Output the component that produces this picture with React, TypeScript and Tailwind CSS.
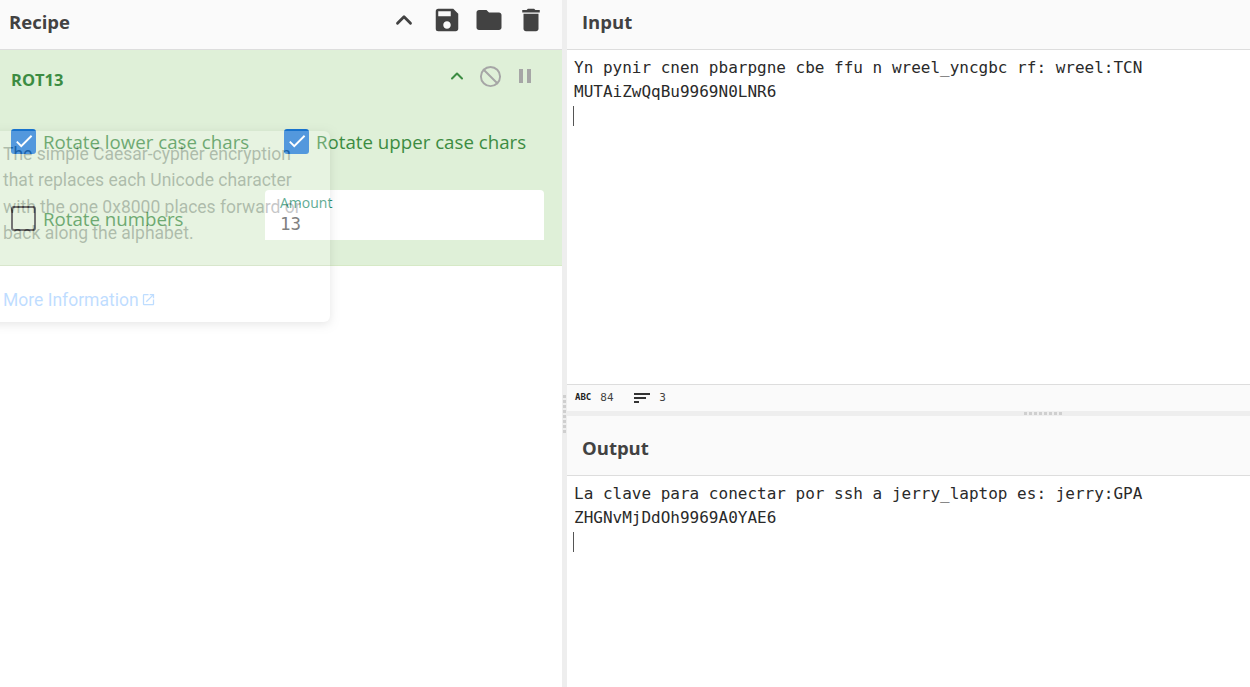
// CyberChef recipe view with a fading popover over the operation.

import { Ban, ChevronUp } from "lucide-react";
import { MdCheck, MdDelete, MdFolder, MdOpenInNew, MdPause, MdSave } from "react-icons/md";

const UI_FONT = "font-['Open_Sans','Noto_Sans',sans-serif]";
const MONO_FONT = "font-['DejaVu_Sans_Mono','Liberation_Mono',monospace]";

function Grip({ vertical }: { vertical?: boolean }) {
  const dots = Array.from({ length: 8 });
  return (
    <div className={vertical ? "flex flex-col gap-[2px]" : "flex flex-row gap-[2px]"}>
      {dots.map((_, i) => (
        <div key={i} className="h-[3px] w-[3px] bg-[#cfcfcf]" />
      ))}
    </div>
  );
}

function CheckRow({ label, checked, className }: { label: string; checked: boolean; className: string }) {
  return (
    <label className={`flex shrink-0 items-center gap-[7px] ${className}`}>
      {checked ? (
        <span className="flex h-[25px] w-[25px] items-center justify-center rounded-[3px] bg-[#1976d2]">
          <MdCheck className="text-white" size={22} />
        </span>
      ) : (
        <span className="h-[25px] w-[25px] rounded-[3px] border-2 border-[#444]" />
      )}
      <span className="pt-[2px] text-[18.7px] leading-[28px] text-[#3c8c42]">{label}</span>
    </label>
  );
}

function Popover() {
  return (
    <div className="absolute left-[-10px] top-[131px] h-[191px] w-[340px] rounded-[6px] bg-white opacity-25 shadow-[0_2px_10px_rgba(0,0,0,0.4)]">
      <div className="h-[134px] pl-[13px] pr-[25px] pt-[10px] font-['Roboto',sans-serif] text-[17.5px] leading-[26.4px] text-[#212529]">
        The simple Caesar-cypher encryption that replaces each Unicode character with the one 0x8000 places forward or
        back along the alphabet.
      </div>
      <div className="flex items-center gap-[2px] border-t border-[#dfdfdf] pl-[13px] pt-[21px] font-['Roboto',sans-serif] text-[17.5px] leading-[26px] text-[#007bff]">
        More Information
        <MdOpenInNew size={15} className="mb-[2px]" />
      </div>
    </div>
  );
}

function RecipePanel() {
  return (
    <div className={`relative h-full w-[562px] shrink-0 overflow-hidden bg-white ${UI_FONT}`}>
      <div className="flex h-[50px] items-center justify-between border-b border-[#dddddd] bg-[#fafafa] pb-[5px] pl-[9px] pr-[16px]">
        <h2 className="text-[18.5px] font-bold text-[#424242]">Recipe</h2>
        <div className="flex items-center gap-[12px] pb-[4px] text-[#424242]">
          <ChevronUp size={26} strokeWidth={2.6} className="mr-[3px]" />
          <MdSave size={30} />
          <MdFolder size={30} />
          <MdDelete size={30} />
        </div>
      </div>
      <div className="h-[216px] border-b border-[#d6e9c6] bg-[#dff0d8] pl-[11px] pr-[25px]">
        <div className="flex h-[60px] items-center justify-between">
          <span className="text-[16.5px] font-bold text-[#3c8c42]">ROT13</span>
          <div className="mb-[8px] flex items-center gap-[12px]">
            <ChevronUp size={20} strokeWidth={2.4} className="text-[#3c8c42]" />
            <Ban size={23} strokeWidth={2} className="mr-[-1px] text-[#a6a6a6]" />
            <MdPause size={24} className="text-[#a6a6a6]" />
          </div>
        </div>
        <div className="mt-[16px] flex">
          <CheckRow label="Rotate lower case chars" checked className="w-[273px]" />
          <CheckRow label="Rotate upper case chars" checked className="w-[260px]" />
        </div>
        <div className="mt-[34px] flex items-start">
          <CheckRow label="Rotate numbers" checked={false} className="mt-[13px] w-[254px]" />
          <div className="h-[50px] w-[279px] shrink-0 rounded-t-[4px] bg-white pl-[15px] pt-[3px]">
            <div className="text-[14px] leading-[19px] text-[#2a9070]">Amount</div>
            <div className={`text-[17.5px] leading-[24px] text-[#555] ${MONO_FONT}`}>13</div>
          </div>
        </div>
      </div>
      <Popover />
    </div>
  );
}

function Gutter() {
  return (
    <div className="flex h-full w-[5px] shrink-0 flex-col items-center justify-center bg-[#eeeeee] pt-[141px]">
      <Grip vertical />
    </div>
  );
}

function IoHeader({ title, className }: { title: string; className: string }) {
  return (
    <div className={`flex shrink-0 items-center border-b border-[#dddddd] bg-[#fafafa] pl-[15px] text-[18.5px] font-bold text-[#424242] ${UI_FONT} ${className}`}>
      {title}
    </div>
  );
}

function TextArea({ lines, className }: { lines: string[]; className: string }) {
  return (
    <div className={`bg-white pl-[7px] pt-[6px] text-[16px] leading-[24px] text-[#2a2a2a] ${MONO_FONT} ${className}`}>
      {lines.map((l) => (
        <div key={l}>{l}</div>
      ))}
      <div className="ml-[-1px] mt-[2px] h-[20px] w-px bg-[#555]" />
    </div>
  );
}

export default function App() {
  return (
    <div className="flex h-[687px] w-[1250px] overflow-hidden bg-white">
      <RecipePanel />
      <Gutter />
      <div className="flex h-full min-w-0 flex-1 flex-col">
        <IoHeader title="Input" className="h-[50px] pb-[5px]" />
        <TextArea
          className="h-[334px]"
          lines={["Yn pynir cnen pbarpgne cbe ffu n wreel_yncgbc rf: wreel:TCN", "MUTAiZwQqBu9969N0LNR6"]}
        />
        <div className="flex h-[27px] items-center border-t border-[#dddddd] bg-[#fafafa] pl-[8px] text-[12px] text-[#424242]">
          <span className={`mr-[9px] text-[9px] font-bold text-[#222] ${MONO_FONT}`}>ABC</span>
          <span className={`w-[34px] ${MONO_FONT} text-[11px]`}>84</span>
          <svg width="16" height="12" viewBox="0 0 16 12" className="mr-[9px]">
            <path d="M0 1h16v2H0zM0 5h12v2H0zM0 9h5v2H0z" fill="#333" />
          </svg>
          <span className={`${MONO_FONT} text-[11px]`}>3</span>
        </div>
        <div className="flex h-[5px] shrink-0 items-center bg-[#eeeeee] pl-[457px]">
          <Grip />
        </div>
        <IoHeader title="Output" className="h-[60px] pt-[4px]" />
        <TextArea
          className="flex-1"
          lines={["La clave para conectar por ssh a jerry_laptop es: jerry:GPA", "ZHGNvMjDdOh9969A0YAE6"]}
        />
      </div>
    </div>
  );
}
